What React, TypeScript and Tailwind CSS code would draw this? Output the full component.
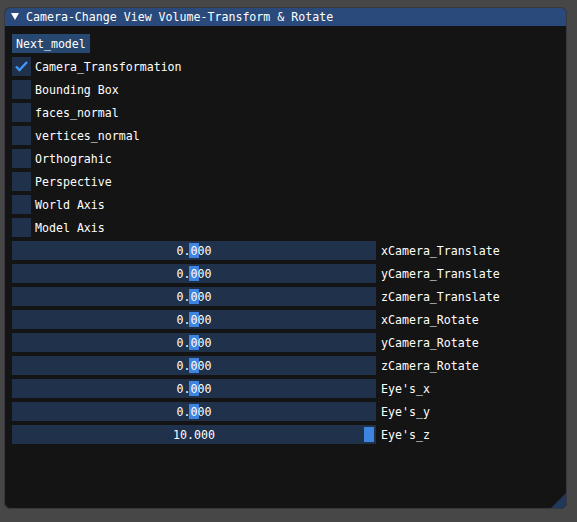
import React from "react";

const checks = [
  { label: "Camera_Transformation", on: true },
  { label: "Bounding Box", on: false },
  { label: "faces_normal", on: false },
  { label: "vertices_normal", on: false },
  { label: "Orthograhic", on: false },
  { label: "Perspective", on: false },
  { label: "World Axis", on: false },
  { label: "Model Axis", on: false },
];

const sliders = [
  { label: "xCamera_Translate", value: "0.000", pos: 0.5 },
  { label: "yCamera_Translate", value: "0.000", pos: 0.5 },
  { label: "zCamera_Translate", value: "0.000", pos: 0.5 },
  { label: "xCamera_Rotate", value: "0.000", pos: 0.5 },
  { label: "yCamera_Rotate", value: "0.000", pos: 0.5 },
  { label: "zCamera_Rotate", value: "0.000", pos: 0.5 },
  { label: "Eye's_x", value: "0.000", pos: 0.5 },
  { label: "Eye's_y", value: "0.000", pos: 0.5 },
  { label: "Eye's_z", value: "10.000", pos: 1 },
];

const Checkbox = ({ label, on }: { label: string; on: boolean }) => (
  <div className="flex items-center h-[19px]">
    <div className="w-[19px] h-[19px] bg-[#1f314b] flex items-center justify-center">
      {on && (
        <svg width="19" height="19" viewBox="0 0 19 19">
          <polyline
            points="4,9.5 7.5,13 15,5"
            fill="none"
            stroke="#4296fa"
            strokeWidth="2.4"
          />
        </svg>
      )}
    </div>
    <span className="ml-[4px] leading-[19px] translate-y-px">{label}</span>
  </div>
);

const Slider = ({ label, value, pos }: { label: string; value: string; pos: number }) => (
  <div className="flex items-center h-[19px]">
    <div className="relative w-[364px] h-[19px] bg-[#1f314b]">
      <div
        className="absolute top-[2px] w-[10px] h-[15px] bg-[#3d85e0]"
        style={{ left: 2 + pos * 350 }}
      />
      <div className="absolute inset-0 flex items-center justify-center leading-[19px] translate-y-px">
        {value}
      </div>
    </div>
    <span className="ml-[5px] leading-[19px] translate-y-px">{label}</span>
  </div>
);

export default function App() {
  return (
    <div
      className="w-[577px] h-[522px] bg-[#474747] pt-[7px] pl-[4px] text-white text-[11.6px]"
      style={{ fontFamily: '"DejaVu Sans Mono", "Liberation Mono", monospace' }}
    >
      <div className="relative w-[563px] h-[502px] bg-[#141414] rounded-[7px] overflow-hidden outline outline-1 -outline-offset-1 outline-[#38383e] flex flex-col">
        <div className="h-[19px] bg-[#294a7a] flex items-center">
          <svg width="8" height="7" viewBox="0 0 8 7" className="ml-[7px]">
            <polygon points="0,0 8,0 4,7" fill="#ffffff" />
          </svg>
          <span className="ml-[7px] leading-[19px] translate-y-px">
            Camera-Change View Volume-Transform &amp; Rotate
          </span>
        </div>
        <div className="flex flex-col gap-[4px] pl-[8px] pt-[8px]">
          <div className="flex">
            <button className="h-[19px] px-[4px] bg-[#274870] leading-[19px]">
              <span className="inline-block translate-y-px">Next_model</span>
            </button>
          </div>
          {checks.map((c) => (
            <Checkbox key={c.label} label={c.label} on={c.on} />
          ))}
          {sliders.map((s) => (
            <Slider key={s.label} label={s.label} value={s.value} pos={s.pos} />
          ))}
        </div>
        <svg
          width="15"
          height="15"
          viewBox="0 0 15 15"
          className="absolute right-[1px] bottom-[1px]"
        >
          <polygon points="15,0 15,15 0,15" fill="#22385a" />
        </svg>
      </div>
    </div>
  );
}
